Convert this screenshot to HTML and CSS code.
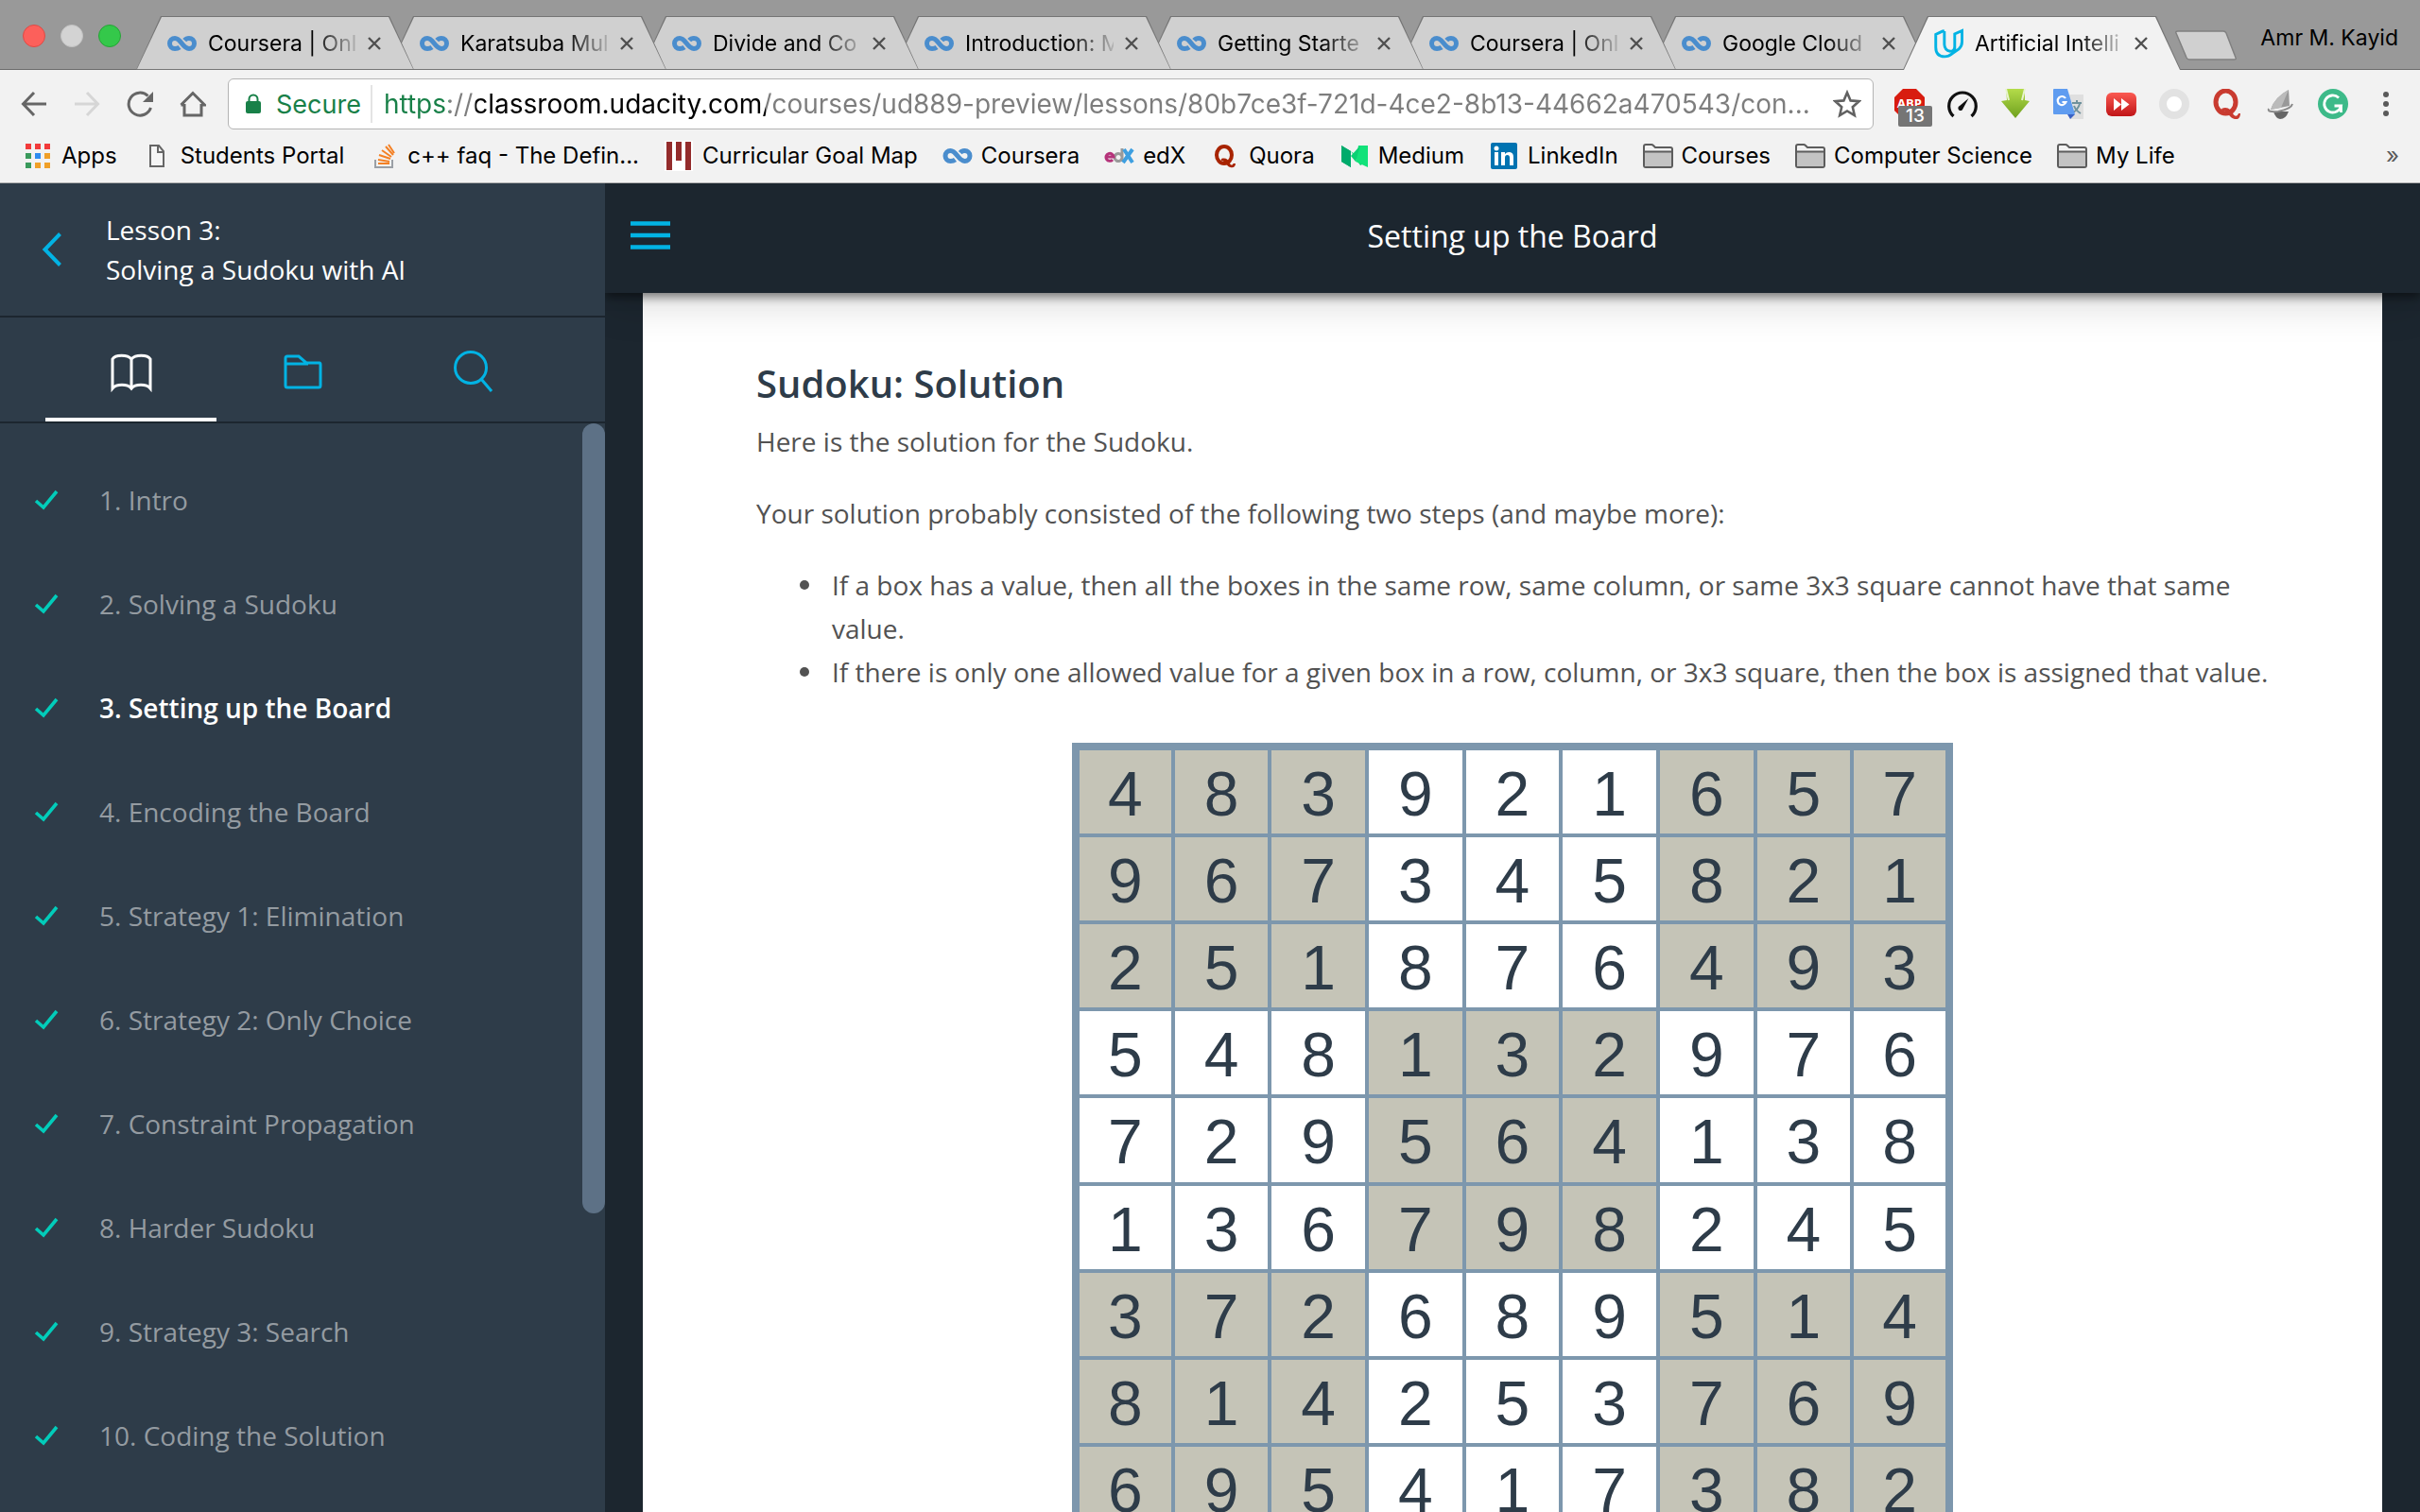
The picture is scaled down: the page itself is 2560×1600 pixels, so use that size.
FILE: index.html
```html
<!DOCTYPE html>
<html lang="en">
<head>
<meta charset="utf-8">
<title>Artificial Intelligence - Setting up the Board</title>
<link rel="stylesheet" href="styles.css">
</head>
<body>
<svg class="defs" aria-hidden="true">
  <symbol id="i-coursera" viewBox="0 0 31 16"><path d="M13 12C11.500 13.200 10 13.500 8 13.500A5.500 5.500 0 0 1 8 2.500C14.500 2.500 16 13.500 23 13.500A5.500 5.500 0 0 0 23 2.500C20.500 2.500 19.200 3.500 18.200 4.700" fill="none" stroke="#4a8dcd" stroke-width="5"/></symbol>
  <symbol id="i-close" viewBox="0 0 14 14"><path d="M1 1L13 13M13 1L1 13" stroke="#505050" stroke-width="2.400" fill="none"/></symbol>
  <symbol id="i-folder" viewBox="0 0 32 26"><path d="M1 23V3Q1 1 3 1H9Q10 1 11 2L13 4H29Q31 4 31 6V23Q31 25 29 25H3Q1 25 1 23Z" fill="#f2f2f2" stroke="#5c5c5c" stroke-width="2"/><path d="M2 9H30V24H2Z" fill="#c3c3c3"/><path d="M1 8.500H31" stroke="#5c5c5c" stroke-width="2"/></symbol>
  <symbol id="i-check" viewBox="0 0 26 22"><path d="M2 12L10 19L24 2" fill="none" stroke="#02ccba" stroke-width="3.600"/></symbol>
</svg>

<header class="browser">
  <div class="tabstrip">
    <div class="lights">
      <button class="light light-red" aria-label="Close window"></button>
      <button class="light light-gray" aria-label="Minimise window"></button>
      <button class="light light-green" aria-label="Zoom window"></button>
    </div>
    <nav class="tabs" aria-label="Open tabs">
      <div class="tab"><svg class="fav"><use href="#i-coursera"/></svg><a class="tab-title" href="#">Coursera | Onl</a><button class="tab-close" aria-label="Close tab"><svg><use href="#i-close"/></svg></button></div>
      <div class="tab"><svg class="fav"><use href="#i-coursera"/></svg><a class="tab-title" href="#">Karatsuba Mul</a><button class="tab-close" aria-label="Close tab"><svg><use href="#i-close"/></svg></button></div>
      <div class="tab"><svg class="fav"><use href="#i-coursera"/></svg><a class="tab-title" href="#">Divide and Co</a><button class="tab-close" aria-label="Close tab"><svg><use href="#i-close"/></svg></button></div>
      <div class="tab"><svg class="fav"><use href="#i-coursera"/></svg><a class="tab-title" href="#">Introduction: M</a><button class="tab-close" aria-label="Close tab"><svg><use href="#i-close"/></svg></button></div>
      <div class="tab"><svg class="fav"><use href="#i-coursera"/></svg><a class="tab-title" href="#">Getting Starte</a><button class="tab-close" aria-label="Close tab"><svg><use href="#i-close"/></svg></button></div>
      <div class="tab"><svg class="fav"><use href="#i-coursera"/></svg><a class="tab-title" href="#">Coursera | Onl</a><button class="tab-close" aria-label="Close tab"><svg><use href="#i-close"/></svg></button></div>
      <div class="tab"><svg class="fav"><use href="#i-coursera"/></svg><a class="tab-title" href="#">Google Cloud</a><button class="tab-close" aria-label="Close tab"><svg><use href="#i-close"/></svg></button></div>
      <div class="tab tab-active"><svg class="fav fav-tall" viewBox="0 0 32 32"><path d="M9.500 2.500L1.800 6V20Q1.800 30 11.500 30.300Q16 30.300 20 27L27 22Q30.500 19 30.500 14V2L22.500 5.500V19Q22.500 24.500 17.500 24.500Q11.500 23.500 11.200 17V2.500M11.200 2.200L9 2.600M22.500 17V26" fill="none" stroke="#02b3e4" stroke-width="3"/></svg><a class="tab-title" href="#">Artificial Intelli</a><button class="tab-close" aria-label="Close tab"><svg><use href="#i-close"/></svg></button></div>
    </nav>
    <button class="newtab" aria-label="New tab"><svg viewBox="0 0 66 33"><path d="M3 1H51Q53 1 54 3L64 29Q65 31 62 31H15Q13 31 12 29L1 3Q0 1 3 1Z" fill="#d0d0d0" stroke="#808080" stroke-width="1.500"/></svg></button>
    <button class="profile">Amr M. Kayid</button>
  </div>

  <div class="toolbar">
    <div class="navbtns">
      <button aria-label="Back"><svg viewBox="0 0 28 28"><path d="M27 14H3M14 2L2.500 14L14 26" fill="none" stroke="#666" stroke-width="3"/></svg></button>
      <button aria-label="Forward"><svg viewBox="0 0 28 28"><path d="M1 14H25M14 2L25.500 14L14 26" fill="none" stroke="#d6d6d6" stroke-width="3"/></svg></button>
      <button aria-label="Reload"><svg viewBox="0 0 28 28"><path d="M25.500 18A12 12 0 1 1 22.500 5.500" fill="none" stroke="#666" stroke-width="3"/><path d="M28 1V12H17Z" fill="#666"/></svg></button>
      <button aria-label="Home"><svg viewBox="0 0 28 28"><path d="M5 14V26H23V14M1.500 15L14 2.500L26.500 15H23M5 15H1.500" fill="none" stroke="#666" stroke-width="3"/></svg></button>
    </div>
    <div class="omnibox">
      <button class="secure"><svg viewBox="0 0 16 22"><rect y="8" width="16" height="13" rx="2" fill="#188048"/><path d="M3.500 9V6A4.500 4.500 0 0 1 12.500 6V9" fill="none" stroke="#188048" stroke-width="2"/></svg>Secure</button>
      <input class="url" type="text" aria-label="Address" value="https://classroom.udacity.com/courses/ud889-preview/lessons/80b7ce3f-721d-4ce2-8b13-44662a470543/con...">
      <button class="star" aria-label="Bookmark this page"><svg viewBox="0 0 30 30"><path d="M15 3L18.600 11.400L27.500 12.200L20.800 18.200L22.800 27L15 22.400L7.200 27L9.200 18.200L2.500 12.200L11.400 11.400Z" fill="none" stroke="#616161" stroke-width="2.600"/></svg></button>
    </div>
    <div class="extensions">
      <button aria-label="Adblock Plus, 13 blocked"><svg viewBox="0 0 32 32"><path d="M9 0H23L32 9V23L23 32H9L0 23V9Z" fill="#d81c10"/><text x="16" y="20" text-anchor="middle" class="abp">ABP</text></svg><span class="count">13</span></button>
      <button aria-label="Speed"><svg viewBox="0 0 32 32"><path d="M6.500 29A14.300 14.300 0 1 1 25.500 29" fill="none" stroke="#111" stroke-width="3.200"/><path d="M22.500 10L13 18A2.600 2.600 0 1 0 16.500 21Z" fill="#111"/></svg></button>
      <button aria-label="Downloader"><svg viewBox="0 0 32 32"><defs><linearGradient id="g-down" x2="0" y2="1"><stop stop-color="#b4dc4a"/><stop offset="1" stop-color="#6fa01e"/></linearGradient></defs><path d="M6 0H26V12L31 13L16 31L1 13L7 12Z" fill="url(#g-down)"/><path d="M6 0L9 12M26 0L23 12" stroke="#e8f4d0" stroke-width="2"/></svg></button>
      <button aria-label="Translate"><svg viewBox="0 0 32 32"><path d="M13 6H32V32H18Z" fill="#dfdfdf"/><path d="M20 15H30M25 12V15M22 18Q24 23 29 26M28 16Q26 22 21 25" fill="none" stroke="#6f929d" stroke-width="2"/><path d="M1 0H15L23 27H1Q0 27 0 26V1Q0 0 1 0Z" fill="#5f9cf0"/><path d="M15 27H23L18 32Z" fill="#3b62c4"/><path d="M13 10A4.500 4.500 0 1 0 13.500 14H9.500" fill="none" stroke="#fff" stroke-width="2.200"/></svg></button>
      <button aria-label="Video speed"><svg viewBox="0 0 32 32"><defs><linearGradient id="g-yt" x2="0" y2="1"><stop stop-color="#fb5a52"/><stop offset="1" stop-color="#c01518"/></linearGradient></defs><rect y="4" width="32" height="25" rx="6" fill="url(#g-yt)"/><path d="M8 10L16 16.500L8 23ZM16 10L24.500 16.500L16 23Z" fill="#fff"/></svg></button>
      <button aria-label="Recorder"><svg viewBox="0 0 32 32"><circle cx="16" cy="16" r="12" fill="#fff" stroke="#e2e2e2" stroke-width="8"/></svg></button>
      <button aria-label="Quora"><svg viewBox="0 0 32 32"><ellipse cx="14.500" cy="14" rx="10.500" ry="12" fill="none" stroke="#c93b30" stroke-width="5"/><path d="M10 21C17 18 20 23 22 26C24 30 27 29 28 26H30C30 30 28 33 24 32C18 31 17 23 11 23Z" fill="#c93b30"/></svg></button>
      <button aria-label="Sail"><svg viewBox="0 0 32 32"><path d="M25 1L26 18L6 22Q10 9 25 1Z" fill="#999"/><path d="M25 1L17 20L6 22Q10 9 25 1Z" fill="#bbb"/><path d="M9 24H25Q22 32 16 32Q11 31 9 24Z" fill="#666"/><path d="M4 21Q2 25 14 24Q28 21 29 16" fill="none" stroke="#8a8a8a" stroke-width="2"/></svg></button>
      <button aria-label="Grammarly"><svg viewBox="0 0 32 32"><circle cx="16" cy="16" r="16" fill="#3dba89"/><path d="M22 9.500A9 9 0 1 0 24.500 18H17.500M24.500 18V25" fill="none" stroke="#fff" stroke-width="2.800"/></svg></button>
      <button aria-label="Browser menu"><svg viewBox="0 0 32 32"><circle cx="16" cy="6" r="3" fill="#5a5a5a"/><circle cx="16" cy="16" r="3" fill="#5a5a5a"/><circle cx="16" cy="26" r="3" fill="#5a5a5a"/></svg></button>
    </div>
  </div>

  <nav class="bookmarks" aria-label="Bookmarks">
    <a href="#"><svg viewBox="0 0 32 32"><path d="M3 3H9V9H3ZM13 3H19V9H13ZM23 3H29V9H23Z" fill="#f23b3b"/><path d="M3 13H9V19H3ZM3 23H9V29H3Z" fill="#3a9a5c"/><path d="M13 13H19V19H13Z" fill="#2e8cf0"/><path d="M23 13H29V19H23ZM13 23H19V29H13ZM23 23H29V29H23Z" fill="#f0a028"/></svg>Apps</a>
    <a href="#"><svg viewBox="0 0 32 32"><path d="M9 5H18L23 11V27H9ZM17 5V12H23" fill="#f5f5f5" stroke="#666" stroke-width="2"/></svg>Students Portal</a>
    <a href="#"><svg viewBox="0 0 32 32"><path d="M7 20V28H25V20" fill="none" stroke="#9ba0a6" stroke-width="2"/><path d="M10 24H22M10 20L22 22M11 15L23 19M14 10L24 17M18 6L26 15M21 4L27 13" stroke="#f48024" stroke-width="2"/></svg>c++ faq - The Defin...</a>
    <a href="#"><svg viewBox="0 0 32 32"><path d="M1 0H31V32H1Z" fill="#fff"/><path d="M3 1H9V31H3ZM13 1H19V21H13ZM23 1H29V31H23Z" fill="#942c2c"/></svg>Curricular Goal Map</a>
    <a href="#"><svg><use href="#i-coursera"/></svg>Coursera</a>
    <a href="#"><svg viewBox="0 0 32 32"><path d="M19 8V22M19 17A4 4 0 1 0 19 18" fill="none" stroke="#9a9a9a" stroke-width="3"/><path d="M3 17H10A4 4 0 1 0 9 20" fill="none" stroke="#b5337a" stroke-width="3"/><path d="M21 9L30 23M30 9L20 23" stroke="#3e9fe0" stroke-width="4"/></svg>edX</a>
    <a href="#"><svg viewBox="0 0 32 32"><ellipse cx="15" cy="15" rx="8" ry="9" fill="none" stroke="#a82400" stroke-width="4"/><path d="M12 19C17 17.500 19 20 20.500 23C22 26.500 24 26 24.500 24H27C27 27 25 29 21.500 28C17 27 16.500 21 12 21Z" fill="#a82400"/></svg>Quora</a>
    <a href="#"><svg viewBox="0 0 32 32"><path d="M2 5L12 11V28L2 22Z" fill="#00ab6c"/><path d="M2 5L12 11L22 26L30 22V5L22 8L17 15L12 11Z" fill="#0ad173"/><path d="M2 5L12 11V28L2 22Z" fill="#00ab6c"/><path d="M20 5L30 5V28L17 22Z" fill="#12e27a"/><path d="M22 5L12 16L17 22Z" fill="#0ad173"/></svg>Medium</a>
    <a href="#"><svg viewBox="0 0 32 32"><rect x="2" y="2" width="28" height="28" rx="2" fill="#0073b1"/><circle cx="8" cy="8" r="2.500" fill="#fff"/><path d="M6 12H10V26H6ZM13 12H17V14Q19 11.500 22 12Q26 12.500 26 17V26H22V18Q22 15 19.500 15Q17 15 17 18V26H13Z" fill="#fff"/></svg>LinkedIn</a>
    <a href="#"><svg><use href="#i-folder"/></svg>Courses</a>
    <a href="#"><svg><use href="#i-folder"/></svg>Computer Science</a>
    <a href="#"><svg><use href="#i-folder"/></svg>My Life</a>
    <button class="more" aria-label="More bookmarks">»</button>
  </nav>
</header>

<div class="app">
  <aside class="sidebar">
    <div class="lesson">
      <button class="back" aria-label="Back to lessons"><svg viewBox="0 0 22 36"><path d="M19.500 1.500L3.500 18L19.500 34.500" fill="none" stroke="#02b3e4" stroke-width="4"/></svg></button>
      <p>Lesson 3:<br>Solving a Sudoku with AI</p>
    </div>
    <div class="panels">
      <button class="panel panel-on" aria-label="Concepts"><svg viewBox="0 0 48 48"><path d="M24 10C20 5 7 5 4 10V41C8 36 20 36 24 41C28 36 40 36 44 41V10C41 5 28 5 24 10ZM24 10V41" fill="none" stroke="#fff" stroke-width="3"/></svg></button>
      <button class="panel" aria-label="Resources"><svg viewBox="0 0 48 48"><path d="M6 15V9Q6 7 8 7H20L28 14H42Q43 14 43 16V38Q43 40 41 40H8Q6 40 6 38ZM6 15H30" fill="none" stroke="#02b3e4" stroke-width="3"/></svg></button>
      <button class="panel" aria-label="Search"><svg viewBox="0 0 48 48"><circle cx="21" cy="19" r="16.500" fill="none" stroke="#02b3e4" stroke-width="3"/><path d="M32 31L43 44" stroke="#02b3e4" stroke-width="3"/></svg></button>
    </div>
    <div class="concepts">
      <ul>
        <li><a href="#"><svg><use href="#i-check"/></svg>1. Intro</a></li>
        <li><a href="#"><svg><use href="#i-check"/></svg>2. Solving a Sudoku</a></li>
        <li><a href="#" class="current"><svg><use href="#i-check"/></svg>3. Setting up the Board</a></li>
        <li><a href="#"><svg><use href="#i-check"/></svg>4. Encoding the Board</a></li>
        <li><a href="#"><svg><use href="#i-check"/></svg>5. Strategy 1: Elimination</a></li>
        <li><a href="#"><svg><use href="#i-check"/></svg>6. Strategy 2: Only Choice</a></li>
        <li><a href="#"><svg><use href="#i-check"/></svg>7. Constraint Propagation</a></li>
        <li><a href="#"><svg><use href="#i-check"/></svg>8. Harder Sudoku</a></li>
        <li><a href="#"><svg><use href="#i-check"/></svg>9. Strategy 3: Search</a></li>
        <li><a href="#"><svg><use href="#i-check"/></svg>10. Coding the Solution</a></li>
      </ul>
      <div class="track"><div class="thumb"></div></div>
    </div>
  </aside>

  <main class="main">
    <header class="topbar">
      <button class="menu" aria-label="Toggle sidebar"><svg viewBox="0 0 44 30"><path d="M1 2.500H43M1 15H43M1 27.500H43" stroke="#02b3e4" stroke-width="4.500"/></svg></button>
      <h1>Setting up the Board</h1>
    </header>
    <article class="page">
      <h2>Sudoku: Solution</h2>
      <p>Here is the solution for the Sudoku.</p>
      <p>Your solution probably consisted of the following two steps (and maybe more):</p>
      <ul>
        <li>If a box has a value, then all the boxes in the same row, same column, or same 3x3 square cannot have that same value.</li>
        <li>If there is only one allowed value for a given box in a row, column, or 3x3 square, then the box is assigned that value.</li>
      </ul>
      <table class="sudoku">
        <tbody class="band">
          <tr><td>4</td><td>8</td><td>3</td><td>9</td><td>2</td><td>1</td><td>6</td><td>5</td><td>7</td></tr>
          <tr><td>9</td><td>6</td><td>7</td><td>3</td><td>4</td><td>5</td><td>8</td><td>2</td><td>1</td></tr>
          <tr><td>2</td><td>5</td><td>1</td><td>8</td><td>7</td><td>6</td><td>4</td><td>9</td><td>3</td></tr>
        </tbody>
        <tbody class="band band-mid">
          <tr><td>5</td><td>4</td><td>8</td><td>1</td><td>3</td><td>2</td><td>9</td><td>7</td><td>6</td></tr>
          <tr><td>7</td><td>2</td><td>9</td><td>5</td><td>6</td><td>4</td><td>1</td><td>3</td><td>8</td></tr>
          <tr><td>1</td><td>3</td><td>6</td><td>7</td><td>9</td><td>8</td><td>2</td><td>4</td><td>5</td></tr>
        </tbody>
        <tbody class="band">
          <tr><td>3</td><td>7</td><td>2</td><td>6</td><td>8</td><td>9</td><td>5</td><td>1</td><td>4</td></tr>
          <tr><td>8</td><td>1</td><td>4</td><td>2</td><td>5</td><td>3</td><td>7</td><td>6</td><td>9</td></tr>
          <tr><td>6</td><td>9</td><td>5</td><td>4</td><td>1</td><td>7</td><td>3</td><td>8</td><td>2</td></tr>
        </tbody>
      </table>
    </article>
  </main>
</div>
</body>
</html>
```
FILE: styles.css
```css
* { box-sizing: border-box; margin: 0; padding: 0; }
html, body { height: 100%; overflow: hidden; }
body { display: flex; flex-direction: column; font-family: "Open Sans", sans-serif; font-size: 28px; }
button, input { font: inherit; color: inherit; background: none; border: 0; }
a { color: inherit; text-decoration: none; }
ul { list-style: none; }
svg { display: block; flex: none; }
.defs { position: absolute; width: 0; height: 0; }

/* Browser chrome */
.browser { flex: none; background: #f2f2f2; border-bottom: 1px solid #b0b0b0; font-family: Inter, sans-serif; font-size: 23px; color: #000; }
.tabstrip { display: flex; height: 74px; padding-top: 17px; background: #999; box-shadow: inset 0 -1px #6b6b6b; }
.lights { display: flex; gap: 16px; padding: 9px 0 0 24px; width: 144px; flex: none; }
.light { width: 24px; height: 24px; border-radius: 50%; }
.light-red { background: #fc605b; border: 1px solid #dd4a45; }
.light-gray { background: #d3d3d3; border: 1px solid #c2c2c2; }
.light-green { background: #34c84a; border: 1px solid #27a337; }
.tabs { display: flex; }
.tab { position: relative; display: flex; align-items: center; width: 294px; height: 57px; padding: 0 35px 0 33px; margin-right: -27px; isolation: isolate; }
.tab::before, .tab::after { content: ""; position: absolute; inset: 0; z-index: -1; clip-path: polygon(0 100%, 26px 0, calc(100% - 26px) 0, 100% 100%); background: #757575; }
.tab::after { inset: 1px 1px 1px 1px; background: #d0d0d0; }
.tab:nth-child(1) { z-index: 7; }
.tab:nth-child(2) { z-index: 6; }
.tab:nth-child(3) { z-index: 5; }
.tab:nth-child(4) { z-index: 4; }
.tab:nth-child(5) { z-index: 3; }
.tab:nth-child(6) { z-index: 2; }
.tab:nth-child(7) { z-index: 1; }
.tab-active { z-index: 8; }
.tab-active::after { inset: 1px 1px 0 1px; background: #f2f2f2; }
.fav { width: 31px; height: 16px; }
.fav-tall { height: 32px; }
.tab-title { flex: 1; min-width: 0; margin: 0 12px; overflow: hidden; white-space: nowrap; line-height: 32px; -webkit-mask-image: linear-gradient(to right, #000 110px, transparent 164px); mask-image: linear-gradient(to right, #000 110px, transparent 164px); }
.tab-close svg { width: 14px; height: 14px; }
.newtab { position: relative; margin: 15px 0 0 21px; align-self: flex-start; }
.newtab svg { width: 66px; height: 33px; }
.profile { margin: 8px 23px 0 auto; align-self: flex-start; line-height: 30px; }

.toolbar { display: flex; align-items: center; padding: 9px 20px 7px 22px; }
.navbtns { display: flex; gap: 28px; width: 219px; }
.navbtns svg { width: 28px; height: 28px; }
.omnibox { flex: 1; display: flex; align-items: center; height: 54px; background: #fff; border: 1px solid #b4b4b4; border-radius: 6px; font-size: 28px; }
.secure { display: flex; align-items: center; gap: 16px; height: 40px; padding: 0 10px 0 18px; border-right: 2px solid #e4e4e4; color: #188048; font-size: 27px; }
.secure svg { width: 16px; height: 22px; }
.url { flex: 1; min-width: 0; height: 40px; margin-left: 12px; -webkit-background-clip: text; background-clip: text; -webkit-text-fill-color: transparent; color: #7d7d7d; background-image: linear-gradient(to right, #188048 69px, #7d7d7d 69px, #7d7d7d 97px, #000 97px, #000 404px, #7d7d7d 404px); }
.star { padding: 0 12px; }
.star svg { width: 30px; height: 30px; }
.extensions { display: flex; gap: 24px; margin-left: 22px; }
.extensions button { position: relative; }
.extensions svg { width: 32px; height: 32px; }
.abp { font: 700 13px "Open Sans", sans-serif; fill: #fff; }
.count { position: absolute; left: 4px; top: 18px; width: 36px; height: 22px; border-radius: 2px; background: #757575; color: #fff; font-size: 19px; font-weight: 500; line-height: 22px; text-align: center; }

.bookmarks { display: flex; align-items: center; gap: 26px; height: 49px; padding: 0 22px 7px 24px; font-size: 24px; line-height: 32px; white-space: nowrap; }
.bookmarks a { display: flex; align-items: center; gap: 9px; }
.bookmarks svg { width: 32px; height: 32px; }
.bookmarks svg:has(use[href="#i-coursera"]) { height: 16px; }
.bookmarks svg:has(use[href="#i-folder"]) { height: 26px; }
.more { margin-left: auto; color: #5a5a5a; line-height: 32px; }

/* Classroom */
.app { flex: 1; min-height: 0; display: grid; grid-template-columns: 25% 1fr; background: #1c262f; }
.sidebar { display: flex; flex-direction: column; min-height: 0; background: #2e3c49; }
.lesson { display: flex; align-items: center; padding: 28px 44px; gap: 46px; border-bottom: 2px solid #1c262f; color: #fff; line-height: 42px; }
.back svg { width: 22px; height: 36px; }
.panels { display: flex; padding: 0 48px; border-bottom: 2px solid #1c262f; }
.panel { flex: 1; display: flex; justify-content: center; align-items: flex-start; padding-top: 34px; border-bottom: 4px solid transparent; height: 110px; }
.panel-on { border-color: #fff; }
.panel svg { width: 48px; height: 48px; }
.concepts { flex: 1; min-height: 0; display: flex; overflow: hidden; }
.concepts ul { flex: 1; padding-top: 26px; }
.concepts a { display: flex; align-items: center; gap: 43px; height: 110px; padding-left: 36px; color: #949ba1; }
.concepts a.current { color: #fff; font-weight: 600; }
.concepts svg { width: 26px; height: 22px; }
.track { width: 24px; }
.thumb { height: 836px; border-radius: 12px; background: #5d7186; }

.main { display: flex; flex-direction: column; min-width: 0; min-height: 0; overflow: hidden; }
.topbar { position: relative; z-index: 1; flex: none; display: grid; grid-template-columns: 44px 1fr 44px; align-items: center; height: 116px; padding: 0 26px 6px; background: #1c262f; color: #fff; box-shadow: 0 4px 10px rgba(0, 0, 0, .5), 0 16px 40px rgba(0, 0, 0, .12); }
.menu svg { width: 44px; height: 30px; }
.topbar h1 { font-size: 32px; font-weight: 400; text-align: center; }
.page { flex: none; margin: 0 40px; padding: 68px 120px; background: #fff; color: #525252; line-height: 46px; }
.page h2 { font-size: 40px; font-weight: 600; line-height: 56px; color: #2e3c49; margin-bottom: 10px; }
.page p { margin-bottom: 30px; }
.page ul { padding-left: 46px; margin-right: -20px; margin-bottom: 52px; }
.page li { display: grid; grid-template-columns: 34px 1fr; }
.page li::before { content: ""; width: 10px; height: 10px; margin-top: 18px; border-radius: 50%; background: #525252; }
.sudoku { margin: 0 auto; width: 932px; height: 841px; table-layout: fixed; border-collapse: collapse; border: 8px solid #7d97ad; font: 66px "Liberation Sans", Arial, sans-serif; line-height: 74px; color: #2e3c49; text-align: center; }
.sudoku td { padding-top: 4px; border: 4px solid #7d97ad; background: #c5c4b7; }
.band td:nth-child(n+4):nth-child(-n+6), .band-mid td { background: #fff; }
.band-mid td:nth-child(n+4):nth-child(-n+6) { background: #c5c4b7; }
```
